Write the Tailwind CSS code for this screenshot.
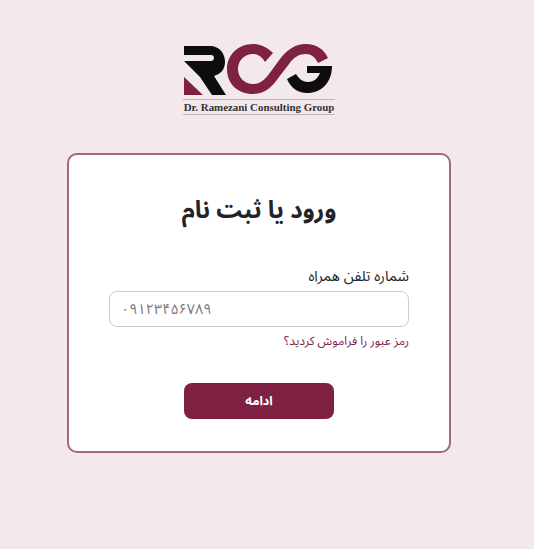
<!DOCTYPE html>
<html lang="fa" dir="rtl">
<head>
<meta charset="utf-8">
<script src="https://cdn.jsdelivr.net/npm/@tailwindcss/browser@4"></script>
</head>
<body class="bg-[#f3e8ec] min-h-[549px] overflow-hidden font-['Noto_Sans_Arabic','Noto_Sans',sans-serif] text-[#212529]">
<div class="w-[518px] mr-[16px] flex flex-col items-center pt-[43px]">
  <div dir="ltr" class="w-[152px] flex flex-col items-center">
    <svg width="152" height="56" viewBox="0 0 152 56">
      <path d="M1 3H27C37 3 42 11 42 19C42 26 38 31 31 33L43 52H29L17 34L1 18H28C30 18 31 16 31 15C31 13 30 12 28 12H1Z" fill="#0d0d0d"/>
      <path d="M1 34L20 52H1Z" fill="#7e2142"/>
      <path d="M90 10C84 4 77 1 70 1C55 1 44 12 44 26C44 41 55 51 70 51C82 51 89 44 96 34L106 21C111 14 116 11 123 11C128 11 132 14 135 20L145 15C141 6 133 1 123 1C112 1 104 7 97 16L86 31C81 38 76 41 70 41C61 41 55 34 55 26C55 18 61 11 70 11C75 11 79 14 82 19Z" fill="#7e2142"/>
      <path d="M124 23H149C149 40 138 50 124 50C115 50 108 45 104 36L113 31C116 36 120 39 125 39C131 39 135 35 137 30H124Z" fill="#0d0d0d"/>
    </svg>
    <div class="w-[152px] h-[16px] border-y border-[#c4b4ba] text-[10.9px] leading-[14px] font-bold text-[#333] text-center whitespace-nowrap font-['Liberation_Serif',serif]">Dr. Ramezani Consulting Group</div>
  </div>
  <div class="mt-[38px] w-[384px] h-[300px] bg-white border-2 border-[#a3687c] rounded-[10px] px-[40px] pt-[38px] flex flex-col">
    <h1 class="text-[24px] leading-[36px] font-bold text-center">ورود یا ثبت نام</h1>
    <label class="mt-[37px] text-[14.6px] leading-[21px] mb-[4px]">شماره تلفن همراه</label>
    <input dir="rtl" class="w-full h-[36px] border border-[#ccc] rounded-[8px] pl-[11px] pr-[12px] text-left text-[14.4px] placeholder:text-[#777]" placeholder="۰۹۱۲۳۴۵۶۷۸۹">
    <a class="mt-[5px] text-[12.1px] leading-[18px] text-[#7e2142]">رمز عبور را فراموش کردید؟</a>
    <button class="mt-[33px] self-center w-[150px] h-[36px] bg-[#7e2142] rounded-[8px] text-white text-[12.5px] font-bold">ادامه</button>
  </div>
</div>
</body>
</html>
